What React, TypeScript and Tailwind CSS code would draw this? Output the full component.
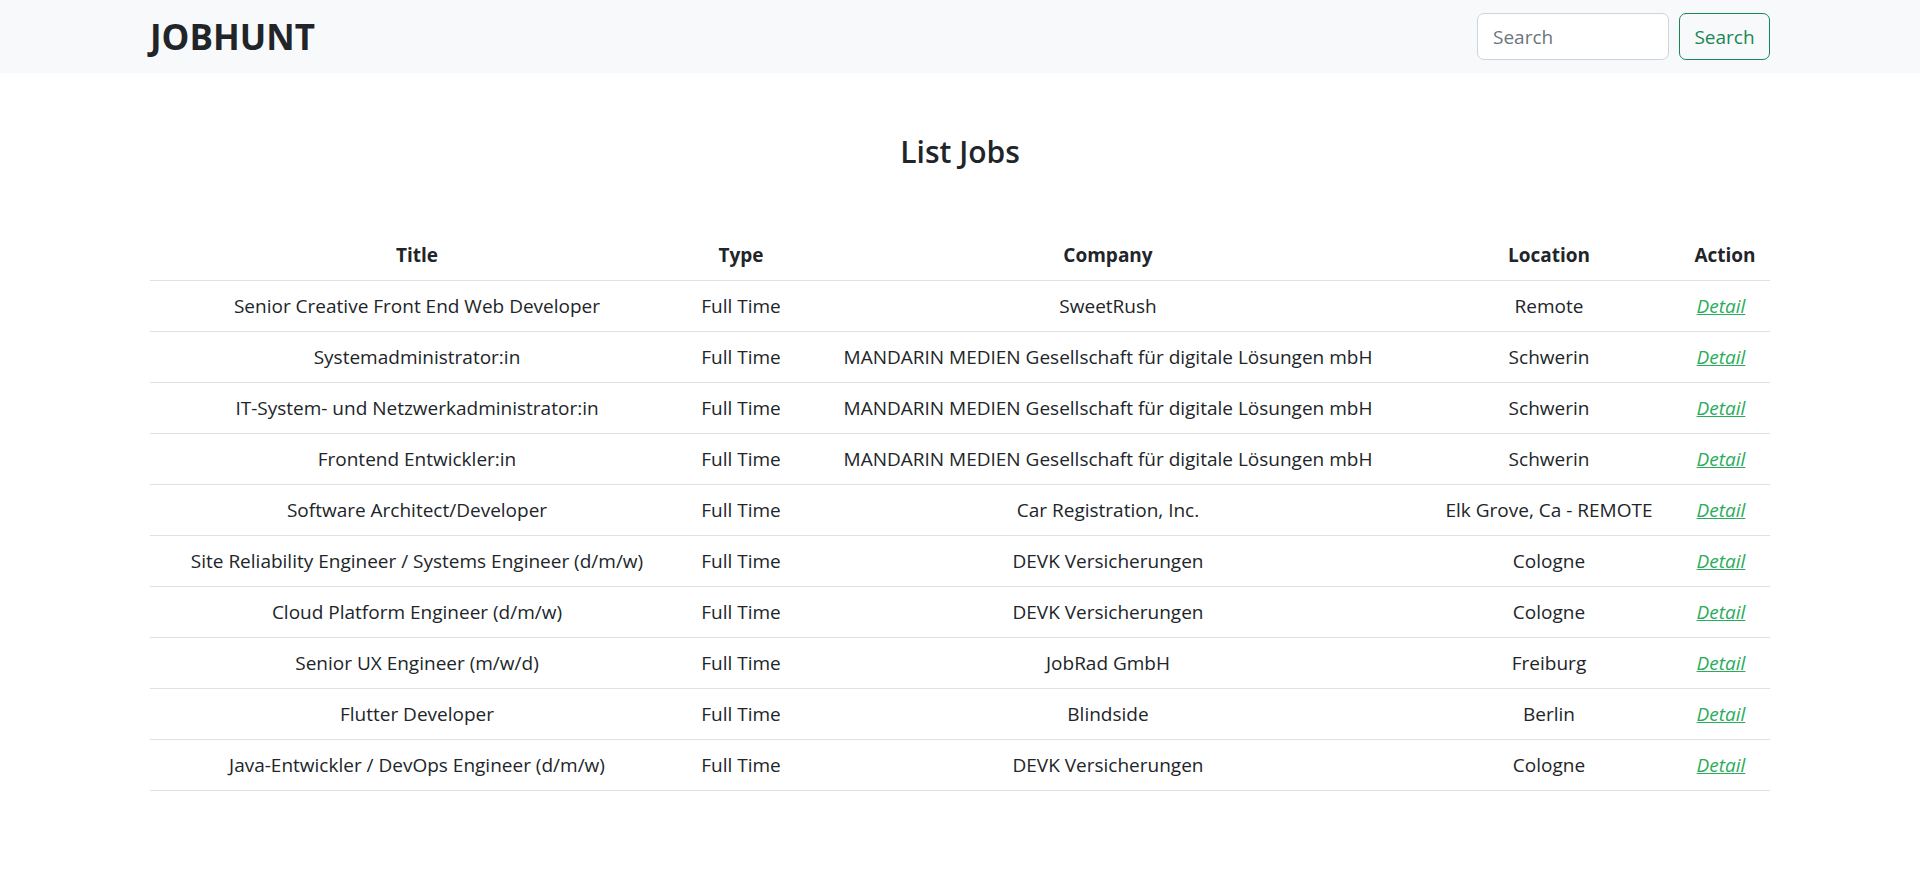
const jobs = [
  { title: "Senior Creative Front End Web Developer", type: "Full Time", company: "SweetRush", location: "Remote" },
  { title: "Systemadministrator:in", type: "Full Time", company: "MANDARIN MEDIEN Gesellschaft für digitale Lösungen mbH", location: "Schwerin" },
  { title: "IT-System- und Netzwerkadministrator:in", type: "Full Time", company: "MANDARIN MEDIEN Gesellschaft für digitale Lösungen mbH", location: "Schwerin" },
  { title: "Frontend Entwickler:in", type: "Full Time", company: "MANDARIN MEDIEN Gesellschaft für digitale Lösungen mbH", location: "Schwerin" },
  { title: "Software Architect/Developer", type: "Full Time", company: "Car Registration, Inc.", location: "Elk Grove, Ca - REMOTE" },
  { title: "Site Reliability Engineer / Systems Engineer (d/m/w)", type: "Full Time", company: "DEVK Versicherungen", location: "Cologne" },
  { title: "Cloud Platform Engineer (d/m/w)", type: "Full Time", company: "DEVK Versicherungen", location: "Cologne" },
  { title: "Senior UX Engineer (m/w/d)", type: "Full Time", company: "JobRad GmbH", location: "Freiburg" },
  { title: "Flutter Developer", type: "Full Time", company: "Blindside", location: "Berlin" },
  { title: "Java-Entwickler / DevOps Engineer (d/m/w)", type: "Full Time", company: "DEVK Versicherungen", location: "Cologne" },
];

export default function App() {
  return (
    <div className="min-h-screen bg-white text-[#212529] text-[19px] leading-[30px] font-['Segoe_UI','Open_Sans',sans-serif]">
      {/* Navbar */}
      <nav className="bg-[#f8f9fa] h-[73px]">
        <div className="w-[1650px] mx-auto px-[15px] h-full flex items-center justify-between">
          <a href="#" className="text-[35px] leading-[42px] font-bold text-[#212529]">JOBHUNT</a>
          <form className="flex gap-[10px]" onSubmit={(e) => e.preventDefault()}>
            <input
              type="search"
              placeholder="Search"
              className="w-[192px] h-[47px] px-[15px] bg-white border border-[#ced4da] rounded-[7px] text-[19px] placeholder:text-[#6c757d] outline-none"
            />
            <button
              type="submit"
              className="w-[91px] h-[47px] border border-[#198754] text-[#198754] rounded-[7px] text-[19px]"
            >
              Search
            </button>
          </form>
        </div>
      </nav>

      {/* Content */}
      <main className="w-[1650px] mx-auto px-[15px]">
        <h4 className="text-center text-[30px] leading-[36px] font-semibold mt-[61px] mb-[60px]">List Jobs</h4>

        <table className="w-full border-collapse text-center">
          <colgroup>
            <col className="w-[534px]" />
            <col className="w-[114px]" />
            <col className="w-[620px]" />
            <col className="w-[262px]" />
            <col className="w-[90px]" />
          </colgroup>
          <thead>
            <tr className="border-b border-[#dee2e6]">
              <th className="py-[10px] px-[10px] font-bold">Title</th>
              <th className="py-[10px] px-[10px] font-bold">Type</th>
              <th className="py-[10px] px-[10px] font-bold">Company</th>
              <th className="py-[10px] px-[10px] font-bold">Location</th>
              <th className="py-[10px] px-[10px] font-bold">Action</th>
            </tr>
          </thead>
          <tbody>
            {jobs.map((job, i) => (
              <tr key={i} className="border-b border-[#dee2e6]">
                <td className="py-[10px] px-[10px]">{job.title}</td>
                <td className="py-[10px] px-[10px]">{job.type}</td>
                <td className="py-[10px] px-[10px]">{job.company}</td>
                <td className="py-[10px] px-[10px]">{job.location}</td>
                <td className="py-[10px] px-[10px]">
                  <a href="#" className="italic underline text-[#2bac5c] pr-[8px]">Detail</a>
                </td>
              </tr>
            ))}
          </tbody>
        </table>
      </main>
    </div>
  );
}
